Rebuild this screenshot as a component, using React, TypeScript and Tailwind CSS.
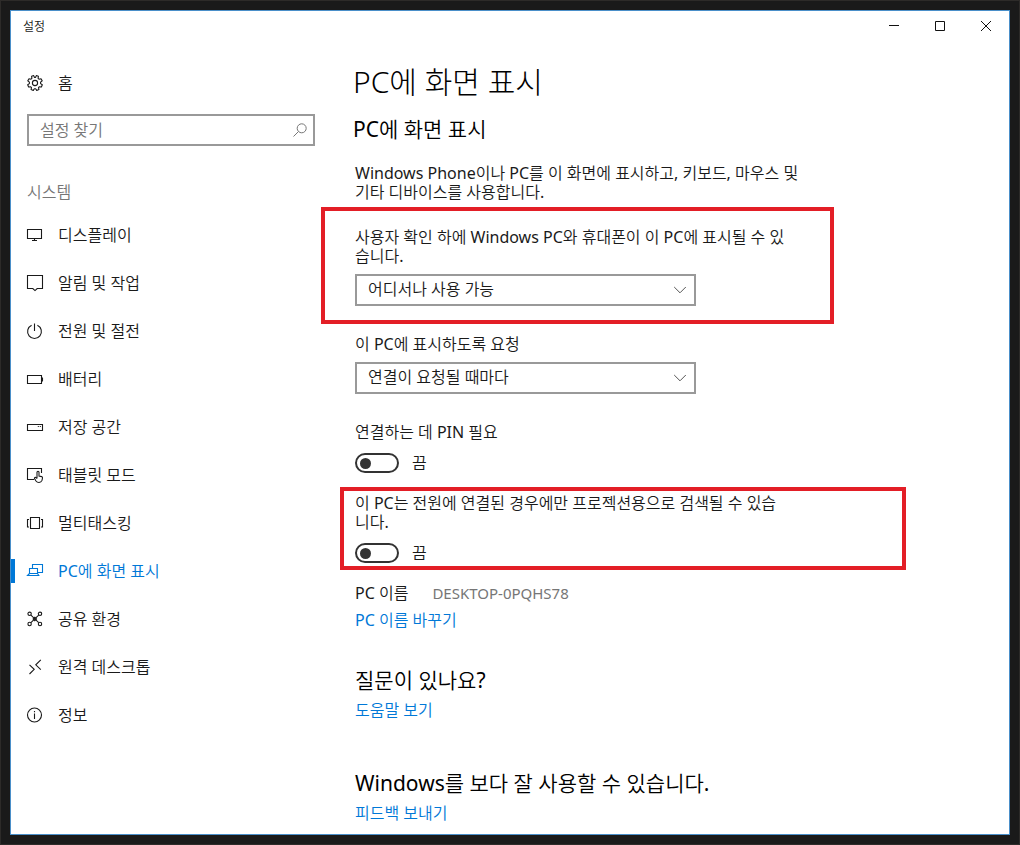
import React from 'react';

const NAV_ITEMS = [
  { id: 'display', label: '디스플레이' },
  { id: 'notifications', label: '알림 및 작업' },
  { id: 'power', label: '전원 및 절전' },
  { id: 'battery', label: '배터리' },
  { id: 'storage', label: '저장 공간' },
  { id: 'tablet', label: '태블릿 모드' },
  { id: 'multitasking', label: '멀티태스킹' },
  { id: 'projecting', label: 'PC에 화면 표시' },
  { id: 'shared', label: '공유 환경' },
  { id: 'remote', label: '원격 데스크톱' },
  { id: 'about', label: '정보' },
];

const ACTIVE_ID = 'projecting';

// Stroke drawings on a 16px grid
const ICONS: Record<string, React.ReactNode> = {
  home: (
    <>
      <path d="M6.7 .6 L7.4 2.4 H8.6 L9.3 .6 L11.4 1.3 L11.1 3.3 L12 4.2 L14 3.7 L15.2 5.8 L13.6 7.1 V8.6 L15.3 9.7 L14.4 12 L12.4 11.7 L11.5 12.6 L11.9 14.5 L9.7 15.4 L8.6 13.7 H7.4 L6.3 15.4 L4.1 14.5 L4.5 12.6 L3.6 11.7 L1.6 12 L.7 9.7 L2.4 8.6 V7.1 L.8 5.8 L2 3.7 L4 4.2 L4.9 3.3 L4.6 1.3 Z" strokeLinejoin="round" />
      <circle cx="8" cy="8" r="2.6" />
    </>
  ),
  display: (
    <>
      <path d="M.5 2.5 H14.5 V11.5 H.5 Z" />
      <path d="M7.5 11.5 V13.5 M5 13.5 H10" />
    </>
  ),
  notifications: <path d="M.5 .5 H15.5 V13.5 H10.2 L8 15.6 L5.8 13.5 H.5 Z" />,
  power: <path d="M7.5 .5 V8 M4.6 2.3 A6.9 6.9 0 1 0 10.4 2.3" />,
  battery: (
    <>
      <path d="M.5 4.5 H14.5 V12.5 H.5 Z" />
      <path d="M15.5 6.5 V10.5" />
    </>
  ),
  storage: (
    <>
      <path d="M.5 5.5 H15.5 V11.5 H.5 Z" />
      <path d="M10.8 7.5 H11.8 M12.8 7.5 H13.8" />
    </>
  ),
  tablet: (
    <>
      <path d="M7 12.5 H.5 V1.5 H14.5 V6" />
      <path d="M10 11.5 V5.3 Q10 4.3 11 4.3 T12 5.3 V9 L14.6 9.6 Q15.6 10 15.5 11 L15 13.4 Q14.2 15.5 12 15.5 Q10 15.5 9 14 L7.4 11.4 Q7.6 10 9 10.6 L10 11.5" />
    </>
  ),
  multitasking: (
    <>
      <path d="M3.5 2.5 H12.5 V13.5 H3.5 Z" />
      <path d="M2 4.5 H.5 V12 H2 M14 4.5 H15.5 V12 H14" />
    </>
  ),
  projecting: (
    <>
      <path d="M5.5 5.5 V1.5 H15.5 V9.5 H10.5" />
      <path d="M2.5 10.5 V5.5 H10.5 V10.5 Z" />
      <path d="M2.5 10.5 L.5 12.5 H11.8 L10.5 10.5" />
    </>
  ),
  shared: (
    <>
      <circle cx="2.6" cy="2.8" r="1.7" />
      <circle cx="13" cy="2.8" r="1.7" />
      <circle cx="2.6" cy="13" r="1.7" />
      <circle cx="13" cy="13" r="1.7" />
      <path d="M3.9 4.1 L11.7 11.7 M11.7 4.1 L3.9 11.7" />
      <path d="M7.8 6.2 L9.5 7.9 L7.8 9.6 L6.1 7.9 Z" />
    </>
  ),
  remote: <path d="M2.5 5.8 L7.2 10.3 L2.5 15 M13.8 .9 L8.8 5.8 L13.8 10.6" />,
  about: (
    <>
      <circle cx="7.5" cy="8" r="7" />
      <path d="M7.5 6.5 V12 M7.5 4 V5.2" />
    </>
  ),
};

function Icon({ name }: { name: string }) {
  return (
    <svg className="h-4 w-4 shrink-0 overflow-visible" viewBox="0 0 16 16" fill="none" stroke="currentColor" strokeWidth="1.1" aria-hidden="true">
      {ICONS[name]}
    </svg>
  );
}

function Dropdown({ id, value }: { id: string; value: string }) {
  return (
    <div className="relative mt-2 max-w-[341px]">
      <select
        id={id}
        className="block h-8 w-full appearance-none border-2 border-[#999999] bg-white pr-8 pb-[2px] pl-[11px] text-base leading-6 text-[#1a1a1a]"
      >
        <option>{value}</option>
      </select>
      <svg className="pointer-events-none absolute top-3 right-[10px] h-2 w-3" viewBox="0 0 12 8" fill="none" stroke="#555555" strokeWidth="1" aria-hidden="true">
        <path d="M.2 1 L6 6.8 L11.8 1" />
      </svg>
    </div>
  );
}

function Toggle({ id }: { id: string }) {
  return (
    <div className="flex items-center gap-[13px]">
      <input
        id={id}
        type="checkbox"
        role="switch"
        className="flex h-5 w-11 appearance-none items-center rounded-full border-2 border-[#333333] bg-white pl-[3px] before:h-[11px] before:w-[11px] before:rounded-full before:bg-[#333333]"
      />
      <span>끔</span>
    </div>
  );
}

// Red marker frame drawn over a setting
function Marker({ className }: { className: string }) {
  return <div className={`pointer-events-none absolute border-4 border-[#e31e26] ${className}`} aria-hidden="true" />;
}

function TitleBar() {
  return (
    <header className="flex h-8 justify-between pl-3">
      <span className="self-center text-xs text-[#1a1a1a]">설정</span>
      <div className="flex h-[30px]">
        <button type="button" aria-label="최소화" className="flex w-[46px] items-center justify-center">
          <svg className="h-[10px] w-[10px]" viewBox="0 0 10 10" stroke="#111111" aria-hidden="true">
            <path d="M0 4.5 H10" />
          </svg>
        </button>
        <button type="button" aria-label="최대화" className="flex w-[46px] items-center justify-center">
          <svg className="h-[10px] w-[10px]" viewBox="0 0 10 10" fill="none" stroke="#111111" aria-hidden="true">
            <path d="M.5 .5 H9.5 V9.5 H.5 Z" />
          </svg>
        </button>
        <button type="button" aria-label="닫기" className="flex w-[46px] items-center justify-center">
          <svg className="h-[10px] w-[10px]" viewBox="0 0 10 10" stroke="#111111" aria-hidden="true">
            <path d="M0 0 L10 10 M10 0 L0 10" />
          </svg>
        </button>
      </div>
    </header>
  );
}

function Sidebar() {
  return (
    <aside className="w-[304px] shrink-0 pt-5">
      <a href="#home" className="flex h-10 items-center gap-[15px] pl-4">
        <Icon name="home" />
        홈
      </a>
      <div className="mt-[11px] ml-4 flex h-8 items-center border-2 border-[#999999] pr-[6px] pl-[11px]">
        <input
          type="text"
          aria-label="설정 찾기"
          placeholder="설정 찾기"
          className="h-7 min-w-0 flex-1 bg-transparent text-base leading-6 outline-none placeholder:text-[#767676]"
        />
        <svg className="h-[14px] w-[14px]" viewBox="0 0 14 14" fill="none" stroke="#777777" aria-hidden="true">
          <circle cx="8.7" cy="5.3" r="4.5" />
          <path d="M5.5 8.5 L.5 13.5" />
        </svg>
      </div>
      <h2 className="mt-9 mb-[9px] ml-4 leading-5 text-[#767676]">시스템</h2>
      <nav>
        {NAV_ITEMS.map((item) => (
          <a
            key={item.id}
            href={`#${item.id}`}
            className={`flex h-12 items-center ${item.id === ACTIVE_ID ? 'text-[#0078d7]' : ''}`}
          >
            <span className={`h-6 w-1 ${item.id === ACTIVE_ID ? 'bg-[#0078d7]' : ''}`} />
            <span className="flex items-center gap-[15px] pl-3">
              <Icon name={item.id} />
              {item.label}
            </span>
          </a>
        ))}
      </nav>
    </aside>
  );
}

export default function App() {
  return (
    <div className="flex min-h-screen border border-[#2d2b29] bg-[#1a1a1a] p-[9px] font-['Noto_Sans','Noto_Sans_CJK_KR_DemiLight','Noto_Sans_CJK_KR',sans-serif] text-base leading-[19px] text-[#1a1a1a]">
      <div className="flex-1 border border-[#4a8fc9] bg-white">
        <TitleBar />
        <div className="flex">
          <Sidebar />

          <main className="min-w-0 flex-1 pt-[19px] pb-[7px] pl-10">
            <h1 className="-ml-0.5 font-['Noto_Sans','Noto_Sans_CJK_KR',sans-serif] text-[30px] leading-10 font-light text-black">
              PC에 화면 표시
            </h1>
            <h2 className="mt-[13px] -ml-0.5 text-[21px] leading-7 text-black">PC에 화면 표시</h2>
            <p className="mt-[21px]">
              Windows Phone이나 PC를 이 화면에 표시하고, 키보드, 마우스 및
              <br />
              기타 디바이스를 사용합니다.
            </p>

            {/* Who can project */}
            <section className="relative mt-[26px]">
              <Marker className="-top-[21px] -bottom-[18px] -left-[34px] w-[513px]" />
              <label htmlFor="availability" className="block">
                사용자 확인 하에 Windows PC와 휴대폰이 이 PC에 표시될 수 있
                <br />
                습니다.
              </label>
              <Dropdown id="availability" value="어디서나 사용 가능" />
            </section>

            <section className="mt-[29px]">
              <label htmlFor="ask" className="block">이 PC에 표시하도록 요청</label>
              <Dropdown id="ask" value="연결이 요청될 때마다" />
            </section>

            <section className="mt-[29px]">
              <label htmlFor="pin" className="mb-[11px] block">연결하는 데 PIN 필요</label>
              <Toggle id="pin" />
            </section>

            {/* Discoverable only on mains power */}
            <section className="relative mt-[21px]">
              <Marker className="-top-[7px] -bottom-[7px] -left-[15px] w-[566px]" />
              <label htmlFor="plugged" className="mb-[11px] block">
                이 PC는 전원에 연결된 경우에만 프로젝션용으로 검색될 수 있습
                <br />
                니다.
              </label>
              <Toggle id="plugged" />
            </section>

            <section className="mt-[21px]">
              <div className="flex gap-6">
                <span>PC 이름</span>
                <span className="text-[15px] text-[#767676]">DESKTOP-0PQHS78</span>
              </div>
              <a href="#rename" className="mt-2 block w-fit text-[#0078d7]">PC 이름 바꾸기</a>
            </section>

            <section className="mt-9">
              <h2 className="text-[21px] leading-7 text-black">질문이 있나요?</h2>
              <a href="#help" className="mt-[7px] block w-fit text-[#0078d7]">도움말 보기</a>
            </section>

            <section className="mt-[49px]">
              <h2 className="text-[21px] leading-7 text-black">Windows를 보다 잘 사용할 수 있습니다.</h2>
              <a href="#feedback" className="mt-[7px] block w-fit text-[#0078d7]">피드백 보내기</a>
            </section>
          </main>
        </div>
      </div>
    </div>
  );
}
